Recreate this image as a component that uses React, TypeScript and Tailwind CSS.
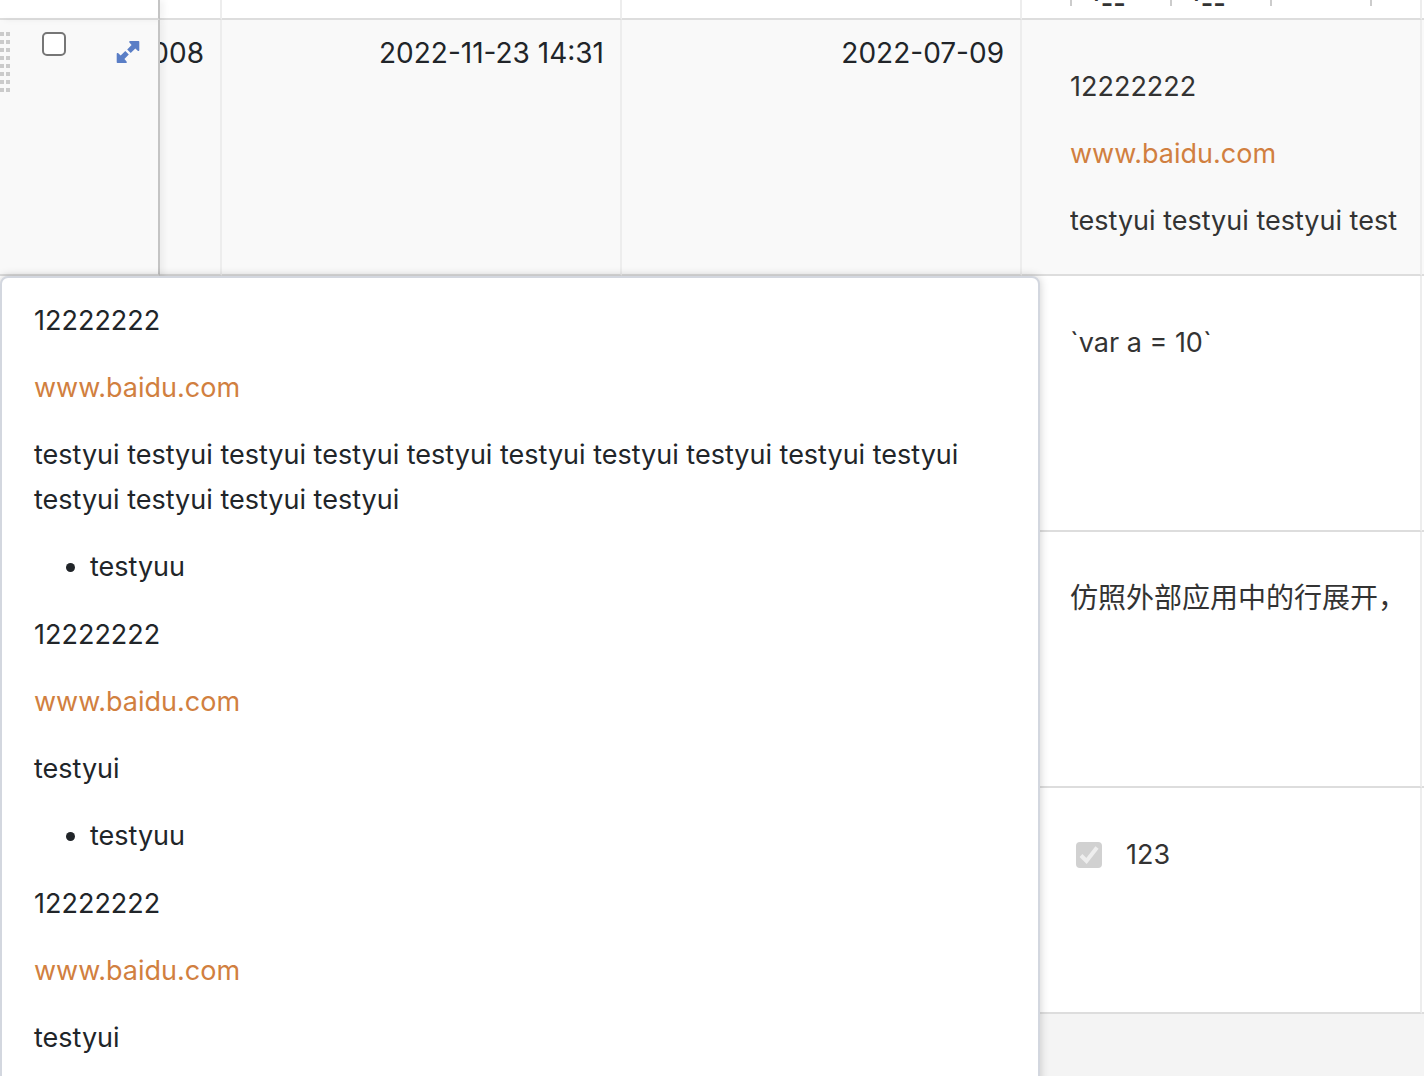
import React from 'react';

interface NoteBlock {
  title: string;
  body: string;
  item?: string;
}

const notes: NoteBlock[] = [
  {
    title: '12222222',
    body: Array(14).fill('testyui').join(' '),
    item: 'testyuu',
  },
  { title: '12222222', body: 'testyui', item: 'testyuu' },
  { title: '12222222', body: 'testyui' },
];

const DragHandle: React.FC = () => (
  <svg width="10" height="60" viewBox="0 0 10 60" aria-hidden="true">
    {Array.from({ length: 8 }).map((_, index) => (
      <g key={index} fill="#cbcbcb">
        <rect x="0" y={index * 8} width="4" height="4" />
        <rect x="6" y={index * 8} width="4" height="4" />
      </g>
    ))}
  </svg>
);

const ExpandIcon: React.FC = () => (
  <svg width="24" height="24" viewBox="0 0 24 24" fill="#5a7ec6" aria-hidden="true">
    <path d="M14 1h8.500q.8 0 .8.800V10q0 1.600-1.300.900L19.300 8.600l-4.600 4.500-3.500-3.500L15.600 5 13.400 2.600Q12.600 1 14 1z" />
    <path d="M10 23H1.500q-.8 0-.8-.800V14q0-1.600 1.300-.900l2.700 2.300 4.600-4.500 3.500 3.500L8.400 19l2.200 2.400Q11.400 23 10 23z" />
  </svg>
);

const Link: React.FC = () => (
  <a href="http://www.baidu.com" className="text-[#d17f40]">
    www.baidu.com
  </a>
);

const NotePopup: React.FC = () => (
  <div className="absolute top-[276px] -bottom-8 left-0 w-[1040px] max-w-full overflow-hidden rounded-lg border-2 border-[#d3d7df] bg-white px-8 pt-5 text-[#212529] shadow-[0_0_10px_rgba(0,0,0,0.2)]">
    <div className="flex flex-col gap-[23px]">
      {notes.map((note, index) => (
        <section key={index} className="flex flex-col gap-[22px]">
          <p>{note.title}</p>
          <p>
            <Link />
          </p>
          <p>{note.body}</p>
          {note.item && (
            <ul className="list-disc pl-14">
              <li>{note.item}</li>
            </ul>
          )}
        </section>
      ))}
    </div>
  </div>
);

const line = 'border-b-2 border-b-[#dddddd]';
const cell = 'border-r-2 border-r-[#ededed] border-b-2 border-b-[#dddddd] p-0 align-top';
const frozen =
  'relative border-r-2 border-r-[#c4c4c4] border-b-2 border-b-[#dddddd] p-0 align-top shadow-[4px_0_6px_rgba(0,0,0,0.05)]';
const value = 'pt-[11px] pr-4 text-right text-[28px] whitespace-nowrap text-[#212529]';

const EmptyCells: React.FC = () => (
  <>
    <td className={frozen} />
    <td className={cell} />
    <td className={cell} />
    <td className={cell} />
  </>
);

const App: React.FC = () => {
  return (
    <main className="relative min-h-screen overflow-hidden bg-[#f4f4f4] font-[Inter,'Noto_Sans_CJK_SC',sans-serif] text-[27px] leading-[45px] text-[#333333]">
      <table className="w-full table-fixed border-separate border-spacing-0 bg-white">
        <colgroup>
          <col className="w-40" />
          <col className="w-[62px]" />
          <col className="w-[400px]" />
          <col className="w-[400px]" />
          <col />
          <col className="w-[2px]" />
        </colgroup>
        <tbody>
          <tr className="h-5">
            <EmptyCells />
            <td className={cell}>
              <div className="ml-12 flex h-[6px] overflow-hidden border-l-2 border-[#cccccc] leading-[8px] font-semibold">
                {["'--", "'--", '', ''].map((text, index) => (
                  <span key={index} className="w-[100px] shrink-0 border-r-2 border-[#cccccc] pl-5">
                    {text}
                  </span>
                ))}
              </div>
            </td>
            <td className={line} />
          </tr>
          <tr className="h-64 bg-[#f9f9f9]">
            <td className={frozen}>
              <div className="flex items-start pt-3">
                <DragHandle />
                <input
                  type="checkbox"
                  aria-label="Select row"
                  className="ml-8 size-6 appearance-none rounded-[5px] border-2 border-[#767676] bg-white"
                />
                <button type="button" aria-label="Expand row" className="mt-2 ml-[50px]">
                  <ExpandIcon />
                </button>
              </div>
            </td>
            <td className={cell}>
              <div className={value}>
                <div className="flex justify-end overflow-hidden">008</div>
              </div>
            </td>
            <td className={cell}>
              <div className={value}>2022-11-23 14:31</div>
            </td>
            <td className={cell}>
              <div className={value}>2022-07-09</div>
            </td>
            <td className={cell}>
              <div className="flex flex-col gap-[22px] pt-11 pl-12">
                <p>12222222</p>
                <p>
                  <Link />
                </p>
                <p className="overflow-hidden whitespace-nowrap">testyui testyui testyui test</p>
              </div>
            </td>
            <td className={line} />
          </tr>
          <tr className="h-64">
            <EmptyCells />
            <td className={cell}>
              <p className="pt-11 pl-12">`var a = 10`</p>
            </td>
            <td className={line} />
          </tr>
          <tr className="h-64">
            <EmptyCells />
            <td className={cell}>
              <p className="overflow-hidden pt-11 pl-12 text-[28px] whitespace-nowrap">仿照外部应用中的行展开，</p>
            </td>
            <td className={line} />
          </tr>
          <tr className="h-[226px]">
            <EmptyCells />
            <td className={cell}>
              <label className="flex items-center gap-6 pt-11 pl-[54px]">
                <span className="grid size-[26px]">
                  <input
                    type="checkbox"
                    defaultChecked
                    disabled
                    className="col-start-1 row-start-1 size-[26px] appearance-none rounded bg-[#d1d1d1]"
                  />
                  <svg viewBox="0 0 26 26" className="col-start-1 row-start-1" fill="none" stroke="#eeeeee" strokeWidth="4">
                    <path d="M5 13.500l5.500 5.500L21 5.500" />
                  </svg>
                </span>
                123
              </label>
            </td>
            <td className={line} />
          </tr>
        </tbody>
      </table>
      <NotePopup />
    </main>
  );
};

export default App;
